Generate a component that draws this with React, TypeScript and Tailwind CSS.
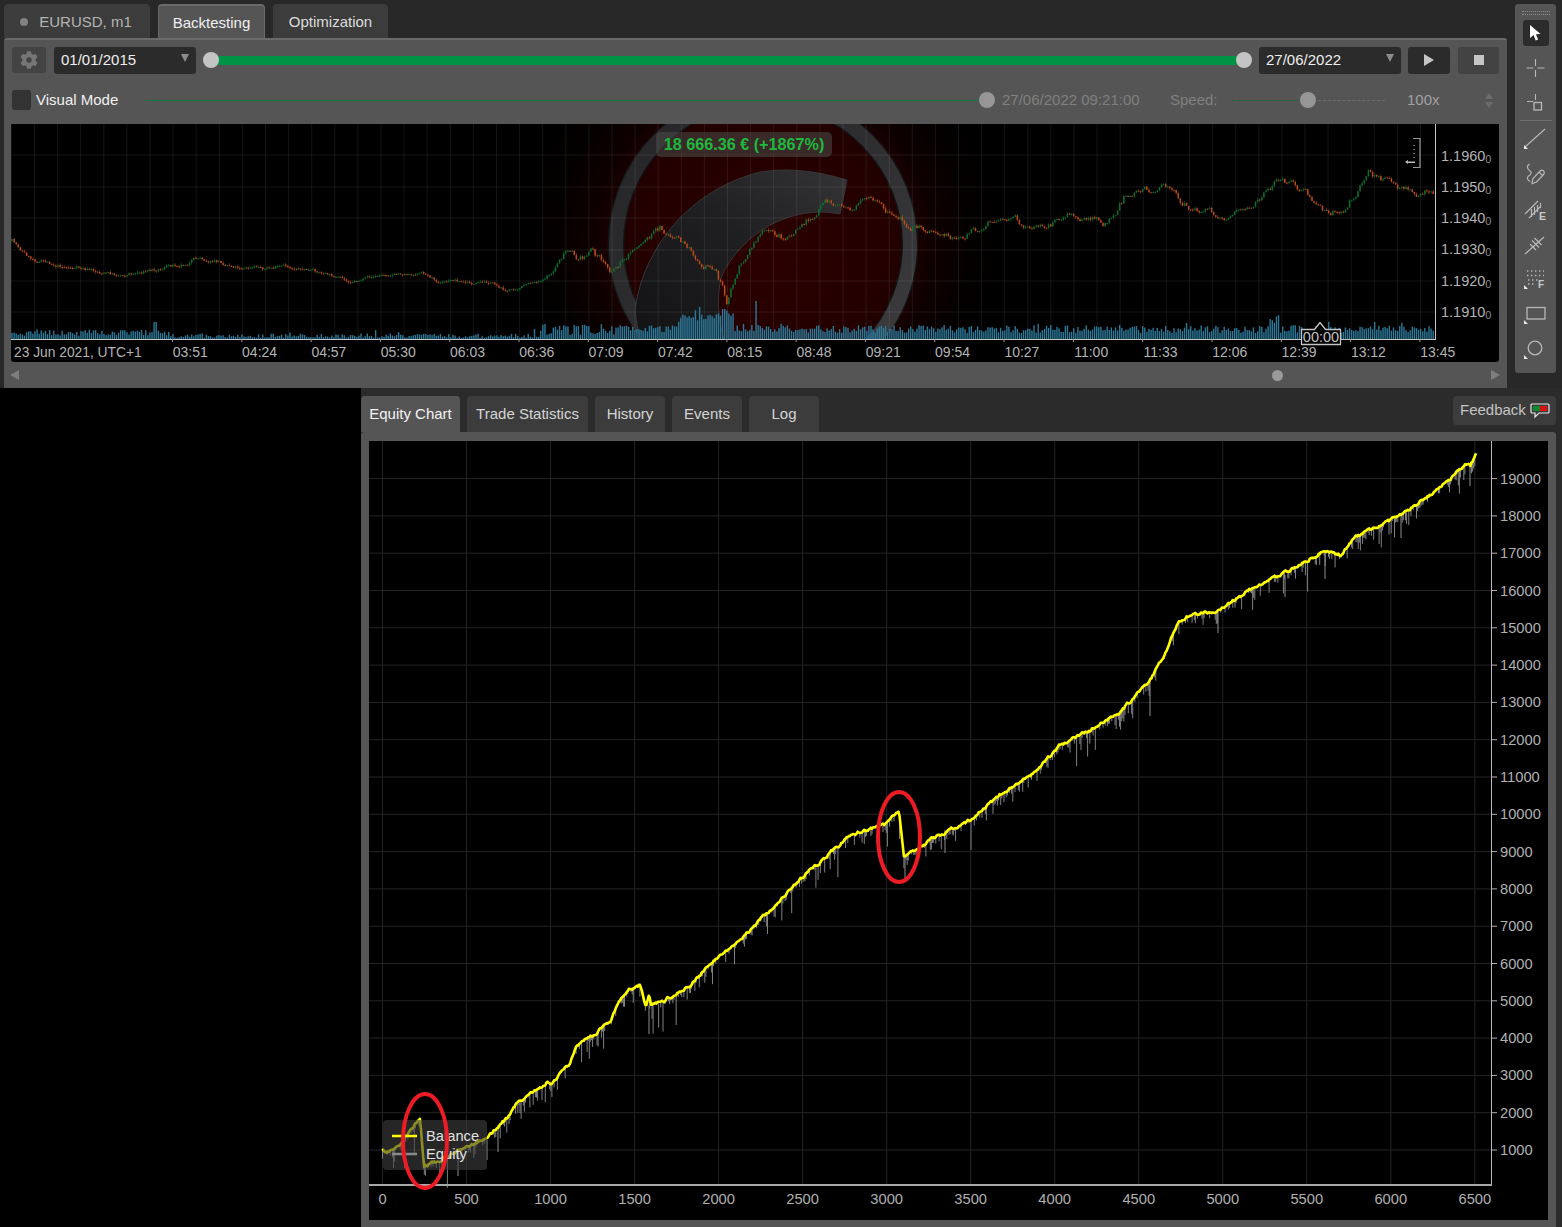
import React from "react";
import { FaCog } from "react-icons/fa";

function rng(seed: number) {
  let a = seed;
  return () => {
    a |= 0; a = (a + 0x6d2b79f5) | 0;
    let t = Math.imul(a ^ (a >>> 15), 1 | a);
    t = (t + Math.imul(t ^ (t >>> 7), 61 | t)) ^ t;
    return ((t ^ (t >>> 14)) >>> 0) / 4294967296;
  };
}
type P = [number, number];
function interp(pts: P[], x: number) {
  if (x <= pts[0][0]) return pts[0][1];
  for (let i = 1; i < pts.length; i++) {
    if (x <= pts[i][0]) {
      const [x0, y0] = pts[i - 1];
      const [x1, y1] = pts[i];
      return y0 + ((y1 - y0) * (x - x0)) / (x1 - x0);
    }
  }
  return pts[pts.length - 1][1];
}

const pricePts: P[] = [[11,240],[30,258],[60,265],[115,275],[150,270],[200,258],[250,268],[300,268],[337,277],[347,282],[390,274],[423,273],[440,282],[455,280],[473,284],[493,283],[507,291],[540,280],[553,272],[560,257],[567,252],[577,260],[593,252],[610,270],[640,243],[660,228],[690,250],[716,268],[727,300],[742,262],[760,232],[790,238],[825,205],[870,205],[915,225],[960,238],[1000,218],[1040,228],[1080,215],[1105,225],[1125,195],[1165,188],[1200,212],[1250,215],[1275,185],[1300,190],[1325,215],[1345,205],[1370,172],[1400,190],[1436,193]];

function Candles() {
  const r = rng(7);
  const out: React.ReactNode[] = [];
  let prev = interp(pricePts, 12);
  let drift = 0;
  for (let x = 12, i = 0; x < 1435; x += 2.09, i++) {
    const calm = x > 300 && x < 550;
    const amp = calm ? 2.4 : x > 555 ? 7 : 4;
    drift = drift * 0.75 + (r() - 0.5) * amp;
    const close = interp(pricePts, x) + drift;
    const top = Math.min(prev, close);
    const bot = Math.max(prev, close);
    const hi = top - r() * 2;
    const lo = bot + r() * 2;
    const up = close < prev;
    const c = up ? "#0e6e30" : "#b94c1c";
    out.push(
      <g key={i}>
        <rect x={x - 0.25} y={hi} width={0.5} height={lo - hi} fill={c} />
        <rect x={x - 0.75} y={top} width={1.5} height={Math.max(bot - top, 1)} fill={c} />
      </g>
    );
    prev = close;
  }
  return <g>{out}</g>;
}

function Volume() {
  const r = rng(21);
  const out: React.ReactNode[] = [];
  for (let x = 12, i = 0; x < 1435; x += 2.09, i++) {
    let base = 6 + r() * 8;
    if (x < 170) base = 3 + r() * 7;
    else if (x < 540) base = 1 + r() * 4.5;
    else if (x < 620) base = 4 + r() * 11;
    else if (x > 680 && x < 735) base += 7 + r() * 9;
    if (x > 1270 && x < 1280) base += 10;
    if (r() > 0.97) base += 5;
    if (Math.abs(x - 757) < 1.1) base = 38;
    if (Math.abs(x - 724) < 2) base = 30;
    if (Math.abs(x - 155) < 2) base = 17;
    out.push(<rect key={i} x={x - 0.7} y={339 - base} width={1.4} height={base} fill="#2c7899" />);
  }
  return <g>{out}</g>;
}

function TopChart() {
  const vx: number[] = [];
  for (let x = 11.4; x < 1436; x += 23.1) vx.push(x);
  const ticks: number[] = [];
  for (let x = 172.5; x < 1436; x += 69.3) ticks.push(x);
  const hy = [155, 187, 218, 250, 281, 312];
  const prices = ["1.1960", "1.1950", "1.1940", "1.1930", "1.1920", "1.1910"];
  const times = ["03:51","04:24","04:57","05:30","06:03","06:36","07:09","07:42","08:15","08:48","09:21","09:54","10:27","11:00","11:33","12:06","12:39","13:12","13:45"];
  return (
    <svg width="1488" height="238" viewBox="11 124 1488 238" className="block rounded-b-[3px]">
      <defs>
        <radialGradient id="glow" gradientUnits="userSpaceOnUse" cx="763" cy="244" r="245">
          <stop offset="0" stopColor="#2c0000" />
          <stop offset="0.58" stopColor="#220000" />
          <stop offset="0.68" stopColor="#100000" />
          <stop offset="0.85" stopColor="#040000" />
          <stop offset="1" stopColor="#000000" />
        </radialGradient>
        <linearGradient id="ring" x1="0" y1="0" x2="1" y2="1">
          <stop offset="0" stopColor="#252527" />
          <stop offset="0.55" stopColor="#2f2f31" />
          <stop offset="1" stopColor="#3f3f41" />
        </linearGradient>
        <linearGradient id="swoosh" x1="0" y1="1" x2="1" y2="0">
          <stop offset="0" stopColor="#131315" />
          <stop offset="0.55" stopColor="#1f1f21" />
          <stop offset="1" stopColor="#343437" />
        </linearGradient>
        <clipPath id="plot"><rect x="11" y="124" width="1425" height="215" /></clipPath>
      </defs>
      <rect x="11" y="124" width="1488" height="238" fill="#000" />
      <g clipPath="url(#plot)">
        <rect x="510" y="124" width="510" height="215" fill="url(#glow)" />
        <circle cx="763" cy="244" r="147" fill="none" stroke="#121214" strokeWidth="17" />
        <circle cx="763" cy="244" r="147" fill="none" stroke="url(#ring)" strokeWidth="14" />
        <path d="M635 312 C640 258 682 192 760 172 C792 167 820 172 847 180 L840 214 C790 204 742 234 722 275 C716 295 718 320 724 340 L640 340 Z" fill="url(#swoosh)" stroke="#363638" strokeWidth="1" />
        {vx.map((x) => <line key={x} x1={x} x2={x} y1={124} y2={339} stroke="#ffffff" strokeOpacity="0.08" />)}
        {hy.map((y) => <line key={y} x1={11} x2={1436} y1={y} y2={y} stroke="#ffffff" strokeOpacity="0.08" />)}
        <Candles />
        <Volume />
      </g>
      <line x1="1435.5" x2="1435.5" y1="124" y2="339.5" stroke="#c4c4c4" />
      <line x1="11" x2="1436" y1="339.5" y2="339.5" stroke="#c4c4c4" />
      {ticks.map((x) => <line key={x} x1={x} x2={x} y1={339} y2={342} stroke="#999" />)}
      {prices.map((p, i) => (
        <text key={p} x="1441" y={[161, 192, 223, 254, 286, 317][i]} fontSize="14.5" fill="#b4b4b4">
          {p}<tspan fontSize="11" dy="2" fill="#8a8a8a">0</tspan>
        </text>
      ))}
      <text x="14" y="357" fontSize="13.8" fill="#b4b4b4">23 Jun 2021, UTC+1</text>
      {times.map((t, i) => (
        <text key={t} x={190.3 + i * 69.3} y="357" textAnchor="middle" fontSize="14" fill="#b4b4b4">{t}</text>
      ))}
      <rect x="656" y="132" width="176" height="25" rx="5" fill="#4a4a4a" fillOpacity="0.55" />
      <text x="744" y="149.5" textAnchor="middle" fontSize="16.2" fontWeight="700" fill="#1fb83c">18 666.36 € (+1867%)</text>
      <path d="M1413 138.5h7v29h-7" fill="none" stroke="#9a9a9a" strokeWidth="1.2" />
      <path d="M1414 145v1M1414 149v1M1414 153v1M1414 157v1" stroke="#bbb" strokeWidth="1.2" />
      <path d="M1405 162l3-2v1.5h7v1.5h-7v1z" fill="#bbb" />
      <path d="M1301.5 329.5h13l5.5-7 5.5 7h15v15h-39z" fill="#000" stroke="#c4c4c4" strokeWidth="1.3" strokeLinejoin="round" />
      <text x="1321" y="342" textAnchor="middle" fontSize="14.5" fill="#c4c4c4">00:00</text>
    </svg>
  );
}

const eqPts: P[] = [[382,1149],[387,1153],[397,1147],[420,1119],[424,1166],[440,1160],[463,1148],[487,1138],[507,1118],[517,1103],[527,1097],[547,1082],[550,1085],[570,1063],[575,1048],[585,1040],[600,1030],[610,1022],[620,1000],[628,990],[640,985],[646,1008],[649,997],[651,1006],[665,1000],[690,985],[715,960],[740,940],[760,920],[780,900],[805,875],[830,853],[850,835],[875,827],[885,825],[899,811],[904,857],[930,840],[970,820],[1000,795],[1035,772],[1060,745],[1090,730],[1120,712],[1150,680],[1165,655],[1178,622],[1190,615],[1220,610],[1250,590],[1300,565],[1325,550],[1340,555],[1355,538],[1400,515],[1430,495],[1460,470],[1468,462],[1470,466],[1476,455]];

function EquityLines() {
  const r = rng(99);
  const spikes: React.ReactNode[] = [];
  const bal: string[] = [];
  let j = 0;
  for (let x = 382.5, i = 0; x < 1476; x += 1.1, i++) {
    j = j * 0.62 + (r() - 0.5) * 2.6;
    const y = interp(eqPts, x) + (x < 897 || x > 907 ? j : 0);
    bal.push(`${x.toFixed(1)},${y.toFixed(1)}`);
    const u = r();
    if (u < 0.45) continue;
    let len = u < 0.75 ? r() * 7 : u < 0.95 ? 4 + r() * 11 : 10 + r() * 16;
    if (u > 0.99) len = 30;
    spikes.push(<line key={i} x1={x} x2={x} y1={y} y2={y + len} stroke="#8f8f8f" strokeWidth="0.9" />);
  }
  const big: [number, number, number][] = [[649, 1005, 1034], [1150, 680, 716], [1325, 552, 579], [1470, 465, 486], [1401, 513, 538], [1218, 610, 633], [1285, 575, 597], [905, 855, 882], [945, 830, 853], [458, 1150, 1176], [487, 1140, 1160], [498, 1125, 1152]];
  return (
    <g>
      {spikes}
      {big.map(([x, a, b]) => <line key={x} x1={x} x2={x} y1={a} y2={b} stroke="#8f8f8f" strokeWidth="1" />)}
      <polyline points={bal.join(" ")} fill="none" stroke="#ffff00" strokeWidth="2.6" strokeLinejoin="round" />
    </g>
  );
}

function EquityChart() {
  const xs = Array.from({ length: 14 }, (_, i) => i * 500);
  const ys = Array.from({ length: 19 }, (_, i) => (i + 1) * 1000);
  const px = (v: number) => 382.5 + v * 0.16805;
  const py = (v: number) => 1150 - ((v - 1000) * 37.3) / 1000;
  return (
    <svg width="1179" height="779" viewBox="369 441 1179 779" className="block">
      <rect x="369" y="441" width="1179" height="779" fill="#000" />
      {xs.map((v) => <line key={v} x1={px(v)} x2={px(v)} y1={441} y2={1185} stroke="#232326" />)}
      {ys.map((v) => <line key={v} x1={369} x2={1491} y1={py(v)} y2={py(v)} stroke="#232326" />)}
      <EquityLines />
      <line x1="1491.5" x2="1491.5" y1="441" y2="1185" stroke="#b8b8b8" />
      <line x1="369" x2="1492" y1="1185" y2="1185" stroke="#a8a8a8" strokeWidth="2" />
      {ys.map((v) => (
        <g key={v}>
          <line x1={1492} x2={1497} y1={py(v)} y2={py(v)} stroke="#b0b0b0" />
          <text x="1500" y={py(v) + 5} fontSize="14.7" fill="#b0b0b0">{v}</text>
        </g>
      ))}
      {xs.map((v) => (
        <text key={v} x={px(v)} y="1204" textAnchor="middle" fontSize="14.7" fill="#b0b0b0">{v}</text>
      ))}
      <rect x="383" y="1120" width="104" height="50" rx="4" fill="#404040" fillOpacity="0.6" />
      <line x1="392" x2="417" y1="1136" y2="1136" stroke="#ffff00" strokeWidth="2.5" />
      <line x1="392" x2="417" y1="1154" y2="1154" stroke="#8a8a8a" strokeWidth="2.5" />
      <text x="426" y="1141" fontSize="14.7" fill="#e0e0e0">Balance</text>
      <text x="426" y="1159" fontSize="14.7" fill="#e0e0e0">Equity</text>
      <ellipse cx="425" cy="1141" rx="22" ry="47" fill="none" stroke="#ed1c24" strokeWidth="4" />
      <ellipse cx="899" cy="837" rx="21" ry="45" fill="none" stroke="#ed1c24" strokeWidth="4" />
    </svg>
  );
}

function Tool({ children }: { children?: React.ReactNode }) {
  return (
    <div className="h-[35px] flex items-center justify-center">
      <svg width="30" height="30" viewBox="0 0 30 30" fill="none" stroke="#b8b8b8" strokeWidth="1.1">{children}</svg>
    </div>
  );
}
const Corner = () => <path d="M3 25v-4l4 4z" fill="#e8e8e8" stroke="none" />;

function Toolbar() {
  return (
    <div className="w-[41px] h-[369px] bg-[#555555] rounded-[3px] flex flex-col items-center">
      <div className="mt-[7px] h-[4px] w-[28px] border-y border-dotted border-[#8a8a8a]" />
      <div className="mt-[5px] w-[26px] h-[26px] rounded-[3px] bg-[#2b2b2b] flex items-center justify-center">
        <svg width="16" height="18" viewBox="0 0 16 18"><path d="M2 1l0 13 3.5-3 2.2 5.5 2.4-1-2.2-5.3 4.6-.2z" fill="#fff" /></svg>
      </div>
      <div className="mt-[4px]">
        <Tool><path d="M14.5 6v7M14.5 17v7M5.5 15h7M16.5 15h7" /></Tool>
      </div>
      <Tool><path d="M14.5 6v6M6 13.5h6" /><rect x="13" y="14.5" width="7.5" height="7.5" strokeWidth="1.3" /></Tool>
      <div className="w-[32px] border-t border-[#6e6e6e]" />
      <Tool><path d="M4 23L24 5" /><Corner /></Tool>
      <Tool>
        <path d="M8.5 5c-3 1.5-2.5 5 0 6.5s2 4-1 5.5c-2 1.5-1 5 2 5.5" strokeWidth="1.2" />
        <path d="M11 24.5l1-5 7-7.5c1-1 2.5-1 3.5 0s1 2.5 0 3.5l-7 7.5z" strokeWidth="1.2" />
        <path d="M18 13l4 4" />
      </Tool>
      <Tool>
        <path d="M4 20L17 7M8 24L19 13M10.5 15v8M13.5 13v8M16.5 11v7M19.5 9v5" strokeWidth="1.2" />
        <text x="18" y="26" fontSize="10.5" fontWeight="700" fill="#c8c8c8" stroke="none">E</text>
      </Tool>
      <Tool><path d="M4 25l9-8 10-9M11 11.5l7 7M13.5 9l7 7M9 15l6 6" strokeWidth="1.2" /></Tool>
      <Tool>
        <path d="M6 7h17M6 11.5h17M7 16h10M7 20h8" strokeDasharray="1.4 2.6" strokeWidth="1.4" />
        <path d="M3 25v-4l4 4z" fill="#e8e8e8" stroke="none" />
        <text x="17" y="24" fontSize="10" fontWeight="700" fill="#c8c8c8" stroke="none">F</text>
      </Tool>
      <Tool><rect x="6" y="8.5" width="18" height="11.5" strokeWidth="1.3" /><Corner /></Tool>
      <Tool><circle cx="14" cy="14" r="6.8" strokeWidth="1.3" /><Corner /></Tool>
    </div>
  );
}

function DateSelect({ value }: { value: string }) {
  return (
    <div className="w-[142px] h-[27px] bg-[#2b2b2b] rounded-[3px] flex items-center justify-between pl-[7px] pr-[7px] text-[15px] text-[#eeeeee]">
      <span>{value}</span>
      <svg width="8" height="8" viewBox="0 0 8 8" className="mb-[5px]"><path d="M0 0h8L4 8z" fill="#8c8c8c" /></svg>
    </div>
  );
}

function TopPanel() {
  return (
    <div className="flex-1 bg-[#555555] border-t-2 border-[#6a6a6a] rounded-t-[3px] flex flex-col">
      <div className="flex items-center pl-[8px] pt-[7px] h-[33px]">
        <div className="w-[34px] h-[26px] bg-[#434343] rounded-[3px] flex items-center justify-center">
          <FaCog size={18} color="#767676" />
        </div>
        <div className="ml-[8px]"><DateSelect value="01/01/2015" /></div>
        <div className="relative w-[1033px] mx-[15px] h-[9px] bg-[#009245]">
          <div className="absolute -left-[8px] -top-[3.5px] w-[16px] h-[16px] rounded-full bg-[#c4c4c4]" />
          <div className="absolute -right-[8px] -top-[3.5px] w-[16px] h-[16px] rounded-full bg-[#c4c4c4]" />
        </div>
        <DateSelect value="27/06/2022" />
        <div className="ml-[7px] w-[42px] h-[27px] bg-[#2b2b2b] rounded-[3px] flex items-center justify-center">
          <svg width="12" height="14" viewBox="0 0 12 14"><path d="M1 1l10 6-10 6z" fill="#c4c4c4" /></svg>
        </div>
        <div className="ml-[8px] w-[41px] h-[27px] bg-[#434343] rounded-[3px] flex items-center justify-center">
          <div className="w-[10px] h-[10px] bg-[#c4c4c4]" />
        </div>
      </div>
      <div className="flex items-center pl-[8px] mt-[17px] h-[20px] text-[15px]">
        <div className="w-[19px] h-[20px] bg-[#333333] rounded-[3px]" />
        <div className="ml-[5px] w-[110px] text-[#f0f0f0]">Visual Mode</div>
        <div className="relative w-[841px] h-px bg-[#0d7a3c]">
          <div className="absolute -right-[8px] -top-[7.5px] w-[16px] h-[16px] rounded-full bg-[#969696]" />
        </div>
        <div className="ml-[15px] w-[168px] text-[#808080]">27/06/2022 09:21:00</div>
        <div className="w-[62px] text-[#808080]">Speed:</div>
        <div className="relative w-[153px] flex">
          <div className="w-[76px] border-t border-dashed border-[#1a6b3c]" />
          <div className="w-[77px] border-t border-dashed border-[#6c6c6c]" />
          <div className="absolute left-[68px] -top-[8px] w-[16px] h-[16px] rounded-full bg-[#969696]" />
        </div>
        <div className="ml-[22px] w-[78px] text-[#a0a0a0]">100x</div>
        <div className="flex flex-col gap-[3px]">
          <svg width="8" height="6" viewBox="0 0 8 6"><path d="M4 0l4 6H0z" fill="#6c6c6c" /></svg>
          <svg width="8" height="6" viewBox="0 0 8 6"><path d="M0 0h8L4 6z" fill="#6c6c6c" /></svg>
        </div>
      </div>
      <div className="pl-[7px] mt-[14px]"><TopChart /></div>
      <div className="flex-1 flex items-center justify-between pl-[6px] pr-[7px]">
        <svg width="9" height="10" viewBox="0 0 9 10"><path d="M9 0v10L0 5z" fill="#7e7e7e" /></svg>
        <div className="relative flex-1">
          <div className="absolute left-[1253px] -top-[5px] w-[11px] h-[11px] rounded-full bg-[#9a9a9a]" />
        </div>
        <svg width="9" height="10" viewBox="0 0 9 10"><path d="M0 0v10l9-5z" fill="#7e7e7e" /></svg>
      </div>
    </div>
  );
}

function TopTab({ label, w, active, dot }: { label: string; w: string; active?: boolean; dot?: boolean }) {
  return (
    <div
      className={`${w} rounded-t-[4px] flex items-center justify-center pt-[2px] text-[15px] ${
        active ? "bg-[#555555] border-t-2 border-x border-[#6a6a6a] text-[#f0f0f0]" : "bg-[#3c3c3c] text-[#dddddd]"
      }`}
    >
      {dot && <div className="w-[8px] h-[8px] rounded-full bg-[#828282] mr-[11px] -ml-[2px]" />}
      <span className={dot ? "text-[#b4b4b4]" : ""}>{label}</span>
    </div>
  );
}

function BottomTab({ label, w, active }: { label: string; w: string; active?: boolean }) {
  return (
    <div className={`${w} rounded-t-[4px] flex items-center justify-center text-[15px] ${active ? "bg-[#555555] text-[#f2f2f2]" : "bg-[#3c3c3c] text-[#d4d4d4]"}`}>
      {label}
    </div>
  );
}

export default function App() {
  return (
    <div className="w-[1562px] h-[1227px] bg-black flex flex-col overflow-hidden font-['Liberation_Sans',Arial,sans-serif]">
      <div className="h-[388px] bg-[#282828] flex pt-[4px] pl-[4px]">
        <div className="w-[1503px] flex flex-col">
          <div className="h-[34px] flex gap-[8px]">
            <TopTab label="EURUSD, m1" w="w-[146px]" dot />
            <TopTab label="Backtesting" w="w-[107px]" active />
            <TopTab label="Optimization" w="w-[115px]" />
          </div>
          <TopPanel />
        </div>
        <div className="ml-[8px]"><Toolbar /></div>
      </div>
      <div className="flex-1 flex">
        <div className="w-[361px] bg-black" />
        <div className="flex-1 bg-[#2b2b2b] flex flex-col pr-[6px]">
          <div className="h-[44px] pt-[8px] flex">
            <div className="flex gap-[7px]">
              <BottomTab label="Equity Chart" w="w-[99px]" active />
              <BottomTab label="Trade Statistics" w="w-[121px]" />
              <BottomTab label="History" w="w-[70px]" />
              <BottomTab label="Events" w="w-[70px]" />
              <BottomTab label="Log" w="w-[70px]" />
            </div>
            <div className="ml-auto w-[103px] h-[29px] bg-[#3c3c3c] rounded-[4px] flex items-center pl-[7px] text-[15px] text-[#c4c4c4]">
              <span>Feedback</span>
              <svg width="20" height="16" viewBox="0 0 20 16" className="ml-[4px]">
                <path d="M2 1h16a1 1 0 0 1 1 1v7a1 1 0 0 1-1 1H9l-4 4v-4H2a1 1 0 0 1-1-1V2a1 1 0 0 1 1-1z" fill="none" stroke="#e4e4e4" strokeWidth="1.2" />
                <rect x="3" y="3" width="7" height="5" fill="#0a8a2a" />
                <rect x="10" y="3" width="7" height="5" fill="#e01010" />
              </svg>
            </div>
          </div>
          <div className="flex-1 bg-[#555555] rounded-t-[3px] pt-[9px] pl-[8px]">
            <EquityChart />
          </div>
        </div>
      </div>
    </div>
  );
}
